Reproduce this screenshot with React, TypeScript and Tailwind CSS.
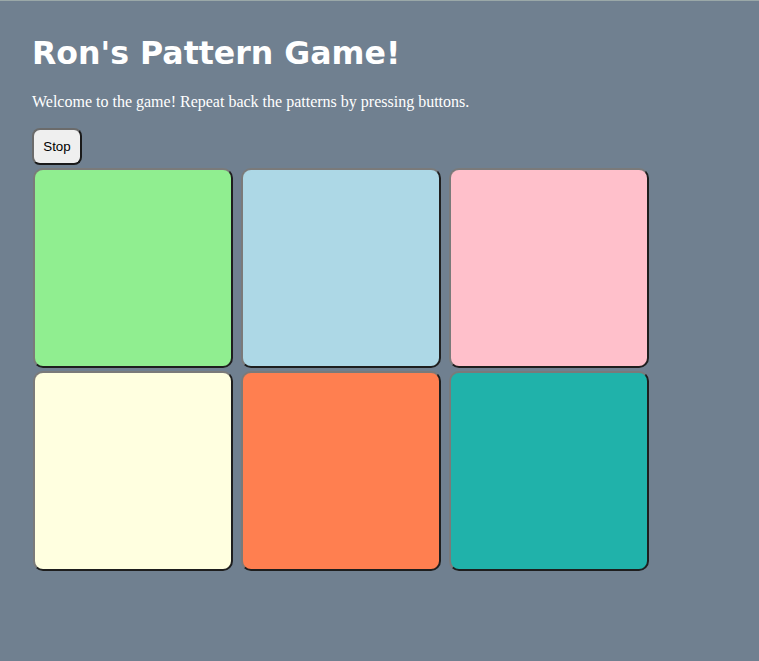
import React from "react";

const colors = ["bg-[#90ee90]", "bg-[#add8e6]", "bg-[#ffc0cb]", "bg-[#ffffe0]", "bg-[#ff7f50]", "bg-[#20b2aa]"];

export default function App() {
  return (
    <div className="min-h-[661px] w-full bg-[#708090] border-t border-[#9aa8a8]">
      <div className="pl-[32px] pt-[34px]">
        <h1 className="text-[31.6px] leading-[37px] font-bold text-white m-0" style={{ fontFamily: "Verdana, 'DejaVu Sans', sans-serif" }}>
          Ron's Pattern Game!
        </h1>
        <p className="text-white text-[16px] leading-[18px] mt-[21px]" style={{ fontFamily: "'Liberation Serif', 'Times New Roman', serif" }}>
          Welcome to the game! Repeat back the patterns by pressing buttons.
        </p>
        <button
          className="mt-[17px] w-[50px] h-[37px] rounded-[8px] bg-[#efefef] text-black text-[13.33px] border-2 border-t-[#6b6b6b] border-l-[#6b6b6b] border-r-[#1a1a1a] border-b-[#1a1a1a] flex items-center justify-center"
          style={{ fontFamily: "'Liberation Sans', Arial, sans-serif" }}
        >
          Stop
        </button>
        <div className="grid grid-cols-[200px_200px_200px] gap-x-[8px] gap-y-[3px] ml-[1px] mt-[3px]">
          {colors.map((c, i) => (
            <button
              key={i}
              className={`${c} w-[200px] h-[200px] rounded-[10px] border-2 border-t-[#7a7a7a] border-l-[#7a7a7a] border-r-[#1e1e1e] border-b-[#1e1e1e]`}
            />
          ))}
        </div>
      </div>
    </div>
  );
}
